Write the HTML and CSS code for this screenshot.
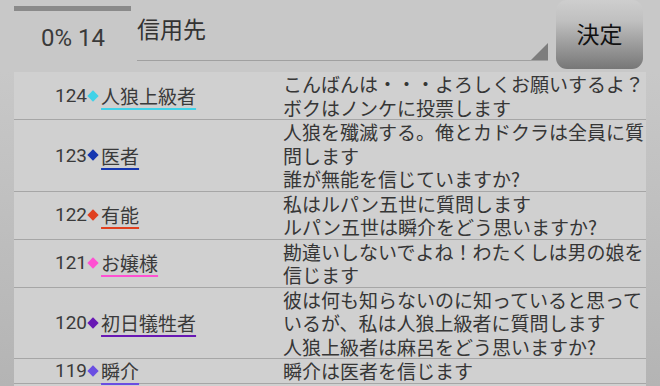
FILE: index.html
```html
<!DOCTYPE html>
<html lang="ja">
<head>
    <meta charset="UTF-8">
    <meta name="viewport" content="width=device-width, initial-scale=1.0">
    <title>信用先</title>
    <link rel="stylesheet" href="styles.css">
</head>
<body>
    <div class="top">
        <div class="count">
            <div class="bar"></div>
            <div class="count-text">0% 14</div>
        </div>
        <div class="target">
            <span class="target-label">信用先</span>
            <svg class="corner" width="17" height="17" viewBox="0 0 17 17">
                <polygon points="17,0 17,17 0,17" fill="#7d7d7d"/>
            </svg>
        </div>
        <button class="decide">決定</button>
    </div>

    <!-- log list -->
    <div class="list-wrap">
        <div class="list">
            <div class="row">
                <div class="who"><span class="num">124</span><span class="dia c-cyan"></span><span class="name u-cyan">人狼上級者</span></div>
                <div class="msg">こんばんは・・・よろしくお願いするよ？<br>ボクはノンケに投票します</div>
            </div>
            <div class="row">
                <div class="who"><span class="num">123</span><span class="dia c-blue"></span><span class="name u-blue">医者</span></div>
                <div class="msg">人狼を殲滅する。俺とカドクラは全員に質問します<br>誰が無能を信じていますか?</div>
            </div>
            <div class="row">
                <div class="who"><span class="num">122</span><span class="dia c-red"></span><span class="name u-red">有能</span></div>
                <div class="msg">私はルパン五世に質問します<br>ルパン五世は瞬介をどう思いますか?</div>
            </div>
            <div class="row">
                <div class="who"><span class="num">121</span><span class="dia c-pink"></span><span class="name u-pink">お嬢様</span></div>
                <div class="msg">勘違いしないでよね！わたくしは男の娘を信じます</div>
            </div>
            <div class="row">
                <div class="who"><span class="num">120</span><span class="dia c-purple"></span><span class="name u-purple">初日犠牲者</span></div>
                <div class="msg">彼は何も知らないのに知っていると思っているが、私は人狼上級者に質問します<br>人狼上級者は麻呂をどう思いますか?</div>
            </div>
            <div class="row">
                <div class="who"><span class="num">119</span><span class="dia c-violet"></span><span class="name u-violet">瞬介</span></div>
                <div class="msg">瞬介は医者を信じます</div>
            </div>
        </div>
    </div>
</body>
</html>
```

FILE: styles.css
```css
html, body {
    height: 100%;
}
body {
    margin: 0;
    background-color: #c8c8c8;
    color: #363636;
    font-family: Roboto, "Noto Sans CJK JP", sans-serif;
    display: flex;
    flex-direction: column;
    overflow: hidden;
}

/* header */
.top {
    display: flex;
    height: 72px;
    flex-shrink: 0;
    padding-right: 17px;
}
.count {
    width: 137px;
    padding-left: 14px;
    box-sizing: border-box;
}
.bar {
    width: 117px;
    height: 5px;
    margin-top: 6px;
    background-color: #8a8a8a;
}
.count-text {
    padding-left: 27px;
    margin-top: 13px;
    font-size: 24px;
    line-height: 28px;
    color: #3a3a3a;
}
.target {
    flex: 1;
    height: 60px;
    display: flex;
    border-bottom: 1px solid #a0a0a0;
}
.target-label {
    flex: 1;
    margin-top: 16px;
    font-size: 23px;
    line-height: 30px;
    color: #333;
}
.corner {
    align-self: flex-end;
}
.decide {
    width: 87px;
    height: 69px;
    margin-left: 8px;
    border: none;
    border-radius: 11px;
    background: linear-gradient(#cecece, #c0c0c0 30%, #777);
    font-family: "Noto Sans CJK JP", sans-serif;
    font-size: 23px;
    color: #111;
    padding: 0 0 4px;
}

/* list */
.list-wrap {
    flex: 1;
    padding: 0 14px;
    background: linear-gradient(#c8c8c8, #b4b4b4);
}
.list {
    background-color: #d0d0d0;
    height: 100%;
}
.row {
    display: grid;
    grid-template-columns: 269px 1fr;
    border-bottom: 1px solid #a6a6a6;
    font-size: 19px;
    line-height: 23.5px;
}
.who {
    display: flex;
    align-items: center;
    padding-left: 41px;
    color: #3a3a3a;
}
.dia {
    width: 8px;
    height: 8px;
    margin: 0 4px 0 2px;
    transform: rotate(45deg);
}
.name {
    font-family: "Noto Sans CJK JP", sans-serif;
    text-decoration: underline;
    text-decoration-thickness: 2px;
    text-underline-offset: 4px;
}
.msg {
    color: #363636;
    font-family: "Noto Sans CJK JP", sans-serif;
}

.c-cyan { background-color: #3fd2e8; }
.c-blue { background-color: #1536b0; }
.c-red { background-color: #e0401f; }
.c-pink { background-color: #ff50d2; }
.c-purple { background-color: #6818b4; }
.c-violet { background-color: #6a4ee2; }

.u-cyan { text-decoration-color: #3fd2e8; }
.u-blue { text-decoration-color: #1536b0; }
.u-red { text-decoration-color: #e0401f; }
.u-pink { text-decoration-color: #ff50d2; }
.u-purple { text-decoration-color: #6818b4; }
.u-violet { text-decoration-color: #6a4ee2; }
```
